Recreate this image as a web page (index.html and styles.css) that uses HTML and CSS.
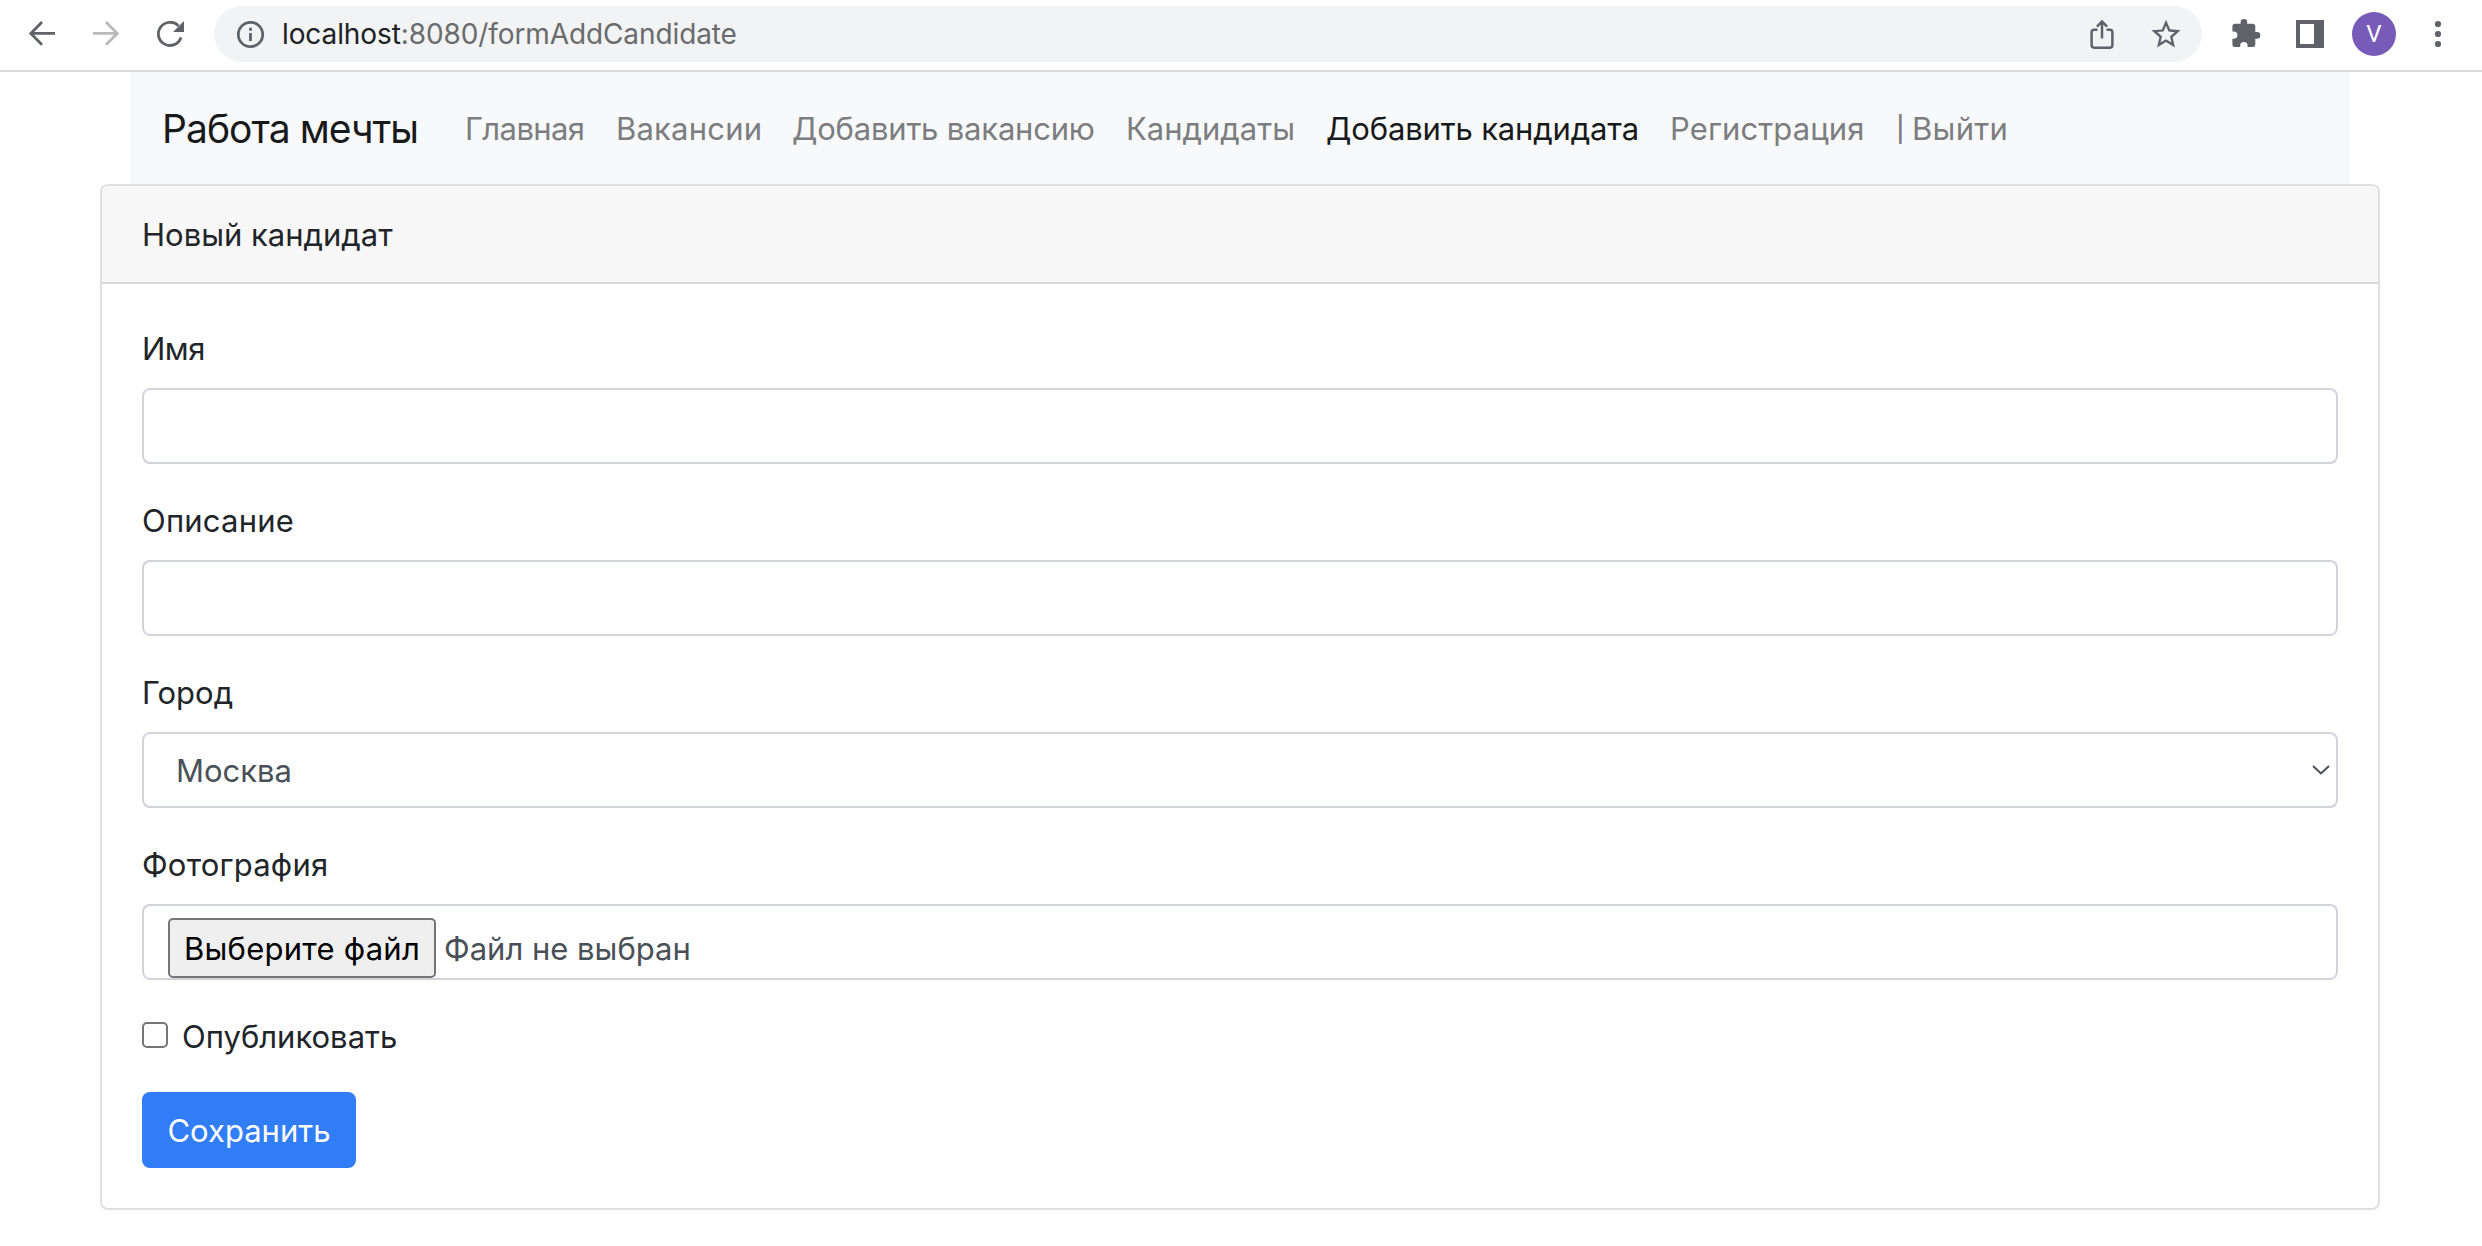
FILE: index.html
```html
<!DOCTYPE html>
<html lang="ru">
<head>
<meta charset="utf-8">
<title>Работа мечты</title>
<link rel="stylesheet" href="styles.css">
</head>
<body>
<header class="toolbar">
  <svg class="icon nav-arrow" viewBox="0 0 32 32"><path d="M29 15.4H5M16 4 4.800 15.400 16 26.800"/></svg>
  <svg class="icon nav-arrow disabled" viewBox="0 0 32 32"><path d="M3 15.400H27M16 4 27.200 15.400 16 26.800"/></svg>
  <svg class="icon reload" viewBox="0 0 32 32"><path class="stroke" d="M27 19.500A11.600 11.600 0 1 1 24.500 8"/><path class="fill" d="M30 3v11H19z"/></svg>
  <div class="omnibox">
    <svg class="icon info" viewBox="0 0 32 32"><circle cx="16.500" cy="16.500" r="12.200"/><path d="M16.500 15v8M16.500 9.800v3"/></svg>
    <div class="url"><span class="host">localhost</span>:8080/formAddCandidate</div>
    <svg class="icon share" viewBox="0 0 32 32"><path d="M11.500 11.700H8.200Q5.600 11.700 5.600 14.300v12.800Q5.600 29.700 8.200 29.700h15.600q2.600 0 2.600-2.600V14.300Q26.400 11.700 23.800 11.700h-3.300M16 20.500V4.500M10.900 8.700 16 3.600l5.100 5.100"/></svg>
    <svg class="icon star" viewBox="1 0.800 22 22"><path d="M22 9.240l-7.190-.62L12 2 9.190 8.630 2 9.240l5.460 4.730L5.820 21 12 17.270 18.180 21l-1.630-7.030L22 9.240zM12 15.400l-3.760 2.270 1-4.280-3.320-2.880 4.380-.38L12 6.100l1.710 4.040 4.380.38-3.320 2.880 1 4.280L12 15.400z"/></svg>
  </div>
  <svg class="icon puzzle" viewBox="0 0.500 32 32"><path d="M27 14.600h-1.700V9q0-2.800-2.800-2.800h-5.300V4.700a3.300 3.300 0 0 0-6.600 0v1.500H5.100Q2.400 6.200 2.400 9v4.900h1.300a3.700 3.700 0 0 1 0 7.400H2.400v5.500q0 2.800 2.700 2.800h5.100v-1.500a3.700 3.700 0 0 1 7.400 0v1.500h4.900q2.800 0 2.800-2.800v-5.600H27a3.300 3.300 0 0 0 0-6.600z"/></svg>
  <svg class="icon panel" viewBox="0 0 32 32"><path fill-rule="evenodd" d="M2 2h28v28H2zM6 6v20h14V6z"/></svg>
  <div class="avatar">V</div>
  <svg class="icon menu" viewBox="0 0 32 32"><circle cx="16" cy="6" r="3.100"/><circle cx="16" cy="16" r="3.100"/><circle cx="16" cy="26" r="3.100"/></svg>
</header>
<nav class="navbar">
  <a class="brand">Работа мечты</a>
  <a class="link home">Главная</a>
  <a class="link vacancies">Вакансии</a>
  <a class="link add-vacancy">Добавить вакансию</a>
  <a class="link candidates">Кандидаты</a>
  <a class="link add-candidate active">Добавить кандидата</a>
  <a class="link registration">Регистрация</a>
  <a class="link logout"><span class="bar">|</span><span>Выйти</span></a>
</nav>
<main class="card">
  <div class="card-header"><span>Новый кандидат</span></div>
  <form class="card-body">
    <div class="group"><label class="label name">Имя</label><div class="control"></div></div>
    <div class="group"><label class="label wide">Описание</label><div class="control"></div></div>
    <div class="group"><label class="label">Город</label><div class="control select"><span>Москва</span><svg class="chevron" viewBox="0 0 20 12"><path d="M2 2l8 7.500L18 2"/></svg></div></div>
    <div class="group"><label class="label wide">Фотография</label><div class="control file"><span class="file-button">Выберите файл</span><span class="file-name">Файл не выбран</span></div></div>
    <label class="check"><span class="box"></span><span class="check-text">Опубликовать</span></label>
    <button type="button" class="submit">Сохранить</button>
  </form>
</main>
</body>
</html>
```
FILE: styles.css
```css
* { box-sizing: border-box; }
body { margin: 0; background: #fff; color: #212529; font: 31px/48px Inter, sans-serif; height: 1246px; overflow: hidden; }

/* Browser toolbar */
.toolbar { height: 72px; border-bottom: 2px solid #dadbdc; display: flex; align-items: center; padding: 0 28px 2px 26px; }
.icon { width: 32px; height: 32px; flex: none; fill: #5f6368; }
.nav-arrow { fill: none; stroke: #5f6368; stroke-width: 2.8; margin-right: 32px; }
.disabled { stroke: #bababa; }
.reload .stroke { fill: none; stroke: #5f6368; stroke-width: 2.8; }
.omnibox { flex: 1; height: 56px; margin: 0 28px; background: #f1f3f4; border-radius: 28px; display: flex; align-items: center; padding: 0 20px; }
.info { fill: none; stroke: #5f6368; stroke-width: 2.8; }
.url { flex: 1; margin-left: 16px; font-size: 28px; letter-spacing: -0.1px; color: #6a6b6d; }
.host { color: #202124; }
.share { fill: none; stroke: #5f6368; stroke-width: 2.5; margin-right: 32px; }
.puzzle { margin-right: 32px; }
.panel { margin-right: 26px; }
.avatar { width: 44px; height: 44px; border-radius: 50%; background: #785bb9; color: #fff; font: 24px/44px Roboto, sans-serif; text-align: center; margin-right: 26px; }

/* Site navigation */
.navbar { margin: 0 132px 0 130px; height: 112px; background: #f8f9fb; display: flex; align-items: center; padding: 2px 32px 0; white-space: nowrap; }
.brand { font-size: 39px; letter-spacing: -0.95px; color: #18191a; width: 303px; flex: none; }
.link { color: #7c7d7e; flex: none; }
.home { width: 151px; letter-spacing: -0.6px; }
.vacancies { width: 176px; letter-spacing: 0.2px; }
.add-vacancy { width: 334px; letter-spacing: -0.2px; }
.candidates { width: 200px; }
.add-candidate { width: 344px; letter-spacing: -0.15px; }
.registration { width: 226px; letter-spacing: 0.1px; }
.logout { display: flex; align-items: center; letter-spacing: 0.3px; }
.bar { font-size: 25px; font-weight: 500; line-height: 46px; width: 16px; }
.active { color: #18191a; }

/* Candidate form */
.card { margin: 0 102px 0 100px; height: 1026px; border: 2px solid #dfdfdf; border-radius: 8px; }
.card-header { height: 98px; border-bottom: 2px solid #d9d9d9; background: #f7f7f7; border-radius: 6px 6px 0 0; padding: 25px 40px 0; }
.card-body { padding: 40px; display: flex; flex-direction: column; align-items: flex-start; }
.group { width: 100%; height: 172px; }
.label { display: block; height: 64px; padding-top: 1px; }
.wide { letter-spacing: 0.2px; }
.name { letter-spacing: -0.5px; }
.control { height: 76px; border: 2px solid #ced4da; border-radius: 8px; color: #495057; display: flex; }
.select { padding: 0 5px 0 32px; justify-content: space-between; align-items: center; }
.select span { padding-top: 2px; }
.chevron { width: 20px; height: 12px; fill: none; stroke: #495057; stroke-width: 2; }
.file { padding: 12px 24px; }
.file-button { height: 60px; width: 268px; border: 2px solid #767676; border-radius: 5px; background: #efefef; color: #000; text-align: center; line-height: 58px; flex: none; letter-spacing: 0.25px; }
.file-name { margin-left: 8px; line-height: 62px; }
.check { display: flex; align-items: flex-start; height: 48px; margin-bottom: 32px; }
.check-text { padding-top: 1px; }
.box { width: 26px; height: 26px; border: 2px solid #767676; border-radius: 5px; margin: 10px 14px 0 0; }
.submit { width: 214px; height: 76px; border: 0; border-radius: 8px; background: #317df6; color: #fff; font: inherit; padding: 2px 0 0; }
```
